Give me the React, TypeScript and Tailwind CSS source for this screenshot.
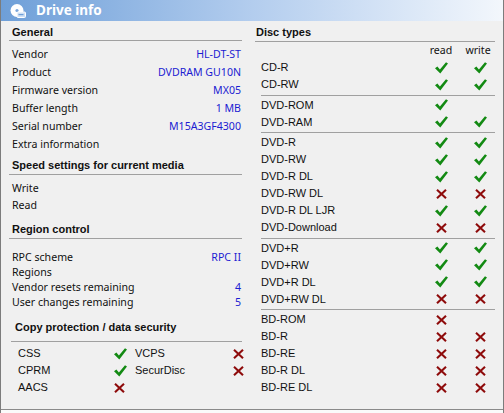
import React from "react";

const Check = () => (
  <svg width="13" height="12" viewBox="0 0 13 12" className="block">
    <path d="M0 6.2 L2.4 4.6 L4.9 7.6 L11 0.2 L13 1.6 L5.3 11.6 Z" fill="#138a13" />
  </svg>
);

const Cross = () => (
  <svg width="11" height="10" viewBox="0 0 11 10" className="block">
    <path d="M1 0.8 L10 9.2 M10 0.8 L1 9.2" stroke="#8e0b0b" strokeWidth="2.1" strokeLinecap="butt" />
  </svg>
);

const Mark = ({ v }: { v: boolean | null }) =>
  v === null ? null : v ? <Check /> : <Cross />;

const general: [string, string][] = [
  ["Vendor", "HL-DT-ST"],
  ["Product", "DVDRAM GU10N"],
  ["Firmware version", "MX05"],
  ["Buffer length", "1 MB"],
  ["Serial number", "M15A3GF4300"],
  ["Extra information", ""],
];

const region: [string, string][] = [
  ["RPC scheme", "RPC II"],
  ["Regions", ""],
  ["Vendor resets remaining", "4"],
  ["User changes remaining", "5"],
];

type Row = [string, boolean | null, boolean | null];
const groups: Row[][] = [
  [
    ["CD-R", true, true],
    ["CD-RW", true, true],
  ],
  [
    ["DVD-ROM", true, null],
    ["DVD-RAM", true, true],
  ],
  [
    ["DVD-R", true, true],
    ["DVD-RW", true, true],
    ["DVD-R DL", true, true],
    ["DVD-RW DL", false, false],
    ["DVD-R DL LJR", true, true],
    ["DVD-Download", false, false],
  ],
  [
    ["DVD+R", true, true],
    ["DVD+RW", true, true],
    ["DVD+R DL", true, true],
    ["DVD+RW DL", false, false],
  ],
  [
    ["BD-ROM", false, null],
    ["BD-R", false, false],
    ["BD-RE", false, false],
    ["BD-R DL", false, false],
    ["BD-RE DL", false, false],
  ],
];

const sans = "font-['Noto_Sans',sans-serif]";
const arial = "font-['Liberation_Sans',Arial,sans-serif]";

const Header = ({ children, h = "h-[18px]" }: { children: React.ReactNode; h?: string }) => (
  <div className={`${h} flex items-center pl-[3px] border-b border-[#a0a0a0] text-[11px] font-bold text-[#111] ${arial}`}>
    {children}
  </div>
);

export default function App() {
  return (
    <div className="w-[504px] h-[413px] flex flex-col bg-[#f0f0f0] border-l border-r border-[#7c7c7c] overflow-hidden">
      {/* Title bar */}
      <div className="h-[21px] shrink-0 flex items-center bg-gradient-to-r from-[#6e9fd8] via-[#b3cdee] to-[#f3f7fc]">
        <svg width="16" height="16" viewBox="0 0 16 16" className="ml-[9px]">
          <circle cx="7" cy="7.5" r="6.5" fill="#ffffff" />
          <circle cx="7" cy="7.5" r="1.6" fill="#7aa6dc" />
          <rect x="7" y="9" width="8.5" height="5.5" rx="1" fill="#cfe0f5" stroke="#ffffff" strokeWidth="1" />
          <rect x="8.5" y="11" width="5" height="1.2" fill="#6e9fd8" />
        </svg>
        <span className={`ml-[10px] text-[13.5px] font-bold text-white leading-none ${sans}`}>Drive info</span>
      </div>

      <div className="flex-1 flex">
        {/* Left column */}
        <div className="w-[251px] shrink-0 pl-[8px] pr-[10px] pt-[3px]">
          <Header h="h-[17px]">General</Header>
          <div className={`mt-[5px] text-[10.6px] text-[#111] ${sans}`}>
            {general.map(([k, v]) => (
              <div key={k} className="h-[18px] flex items-center justify-between pl-[3px]">
                <span>{k}</span>
                <span className="text-[#1c1cd2] pr-[1px]">{v}</span>
              </div>
            ))}
          </div>

          <div className="mt-[3px]">
            <Header>Speed settings for current media</Header>
          </div>
          <div className={`mt-[5px] text-[10.6px] text-[#111] ${sans}`}>
            <div className="h-[17px] flex items-center pl-[3px]">Write</div>
            <div className="h-[17px] flex items-center pl-[3px]">Read</div>
          </div>

          <div className="mt-[7px]">
            <Header>Region control</Header>
          </div>
          <div className={`mt-[11px] text-[10.6px] text-[#111] ${sans}`}>
            {region.map(([k, v]) => (
              <div key={k} className="h-[15px] flex items-center justify-between pl-[3px]">
                <span>{k}</span>
                <span className="text-[#1c1cd2] pr-[1px]">{v}</span>
              </div>
            ))}
          </div>

          <div className="mt-[9px] ml-[2px]">
            <div className={`h-[23px] pl-[4px] border-b border-[#a0a0a0] text-[11px] font-bold leading-[16px] text-[#111] ${arial}`}>
              Copy protection / data security
            </div>
          </div>
          <div className={`mt-[3px] pl-[9px] grid grid-cols-[96px_21px_98px_20px] text-[11px] text-[#111] ${arial}`}>
            <div className="h-[17px] flex items-center">CSS</div>
            <div className="h-[17px] flex items-center"><Check /></div>
            <div className="h-[17px] flex items-center">VCPS</div>
            <div className="h-[17px] flex items-center"><Cross /></div>
            <div className="h-[17px] flex items-center">CPRM</div>
            <div className="h-[17px] flex items-center"><Check /></div>
            <div className="h-[17px] flex items-center">SecurDisc</div>
            <div className="h-[17px] flex items-center"><Cross /></div>
            <div className="h-[17px] flex items-center">AACS</div>
            <div className="h-[17px] flex items-center"><Cross /></div>
          </div>
        </div>

        {/* Right column */}
        <div className="flex-1 pl-[3px] pr-[11px] pt-[3px]">
          <Header>
            <span className="-ml-[2px]">Disc types</span>
          </Header>
          <div className={`h-[15px] mt-[1px] flex items-center text-[10.6px] text-[#111] ${sans}`}>
            <div className="w-[171px]" />
            <div className="w-[30px] text-center">read</div>
            <div className="w-[30px] ml-[9px] text-center pr-[4px]">write</div>
          </div>
          <div className={`mt-[1px] text-[11px] text-[#111] ${arial}`}>
            {groups.map((g, gi) => (
              <div key={gi}>
                {gi > 0 && <div className="ml-[6px] mt-[1.5px] mb-[1px] h-px bg-[#a0a0a0]" />}
                {g.map(([name, r, w]) => (
                  <div key={name} className="h-[17px] flex items-center">
                    <div className="w-[171px] pl-[6px]">{name}</div>
                    <div className="w-[30px] flex justify-center"><Mark v={r} /></div>
                    <div className="w-[30px] ml-[9px] flex justify-center"><Mark v={w} /></div>
                  </div>
                ))}
              </div>
            ))}
          </div>
        </div>
      </div>

      {/* Bottom border */}
      <div className="h-[1px] shrink-0 bg-[#8a8a8a]" />
      <div className="h-[3px] shrink-0 bg-[#fafafa]" />
    </div>
  );
}
